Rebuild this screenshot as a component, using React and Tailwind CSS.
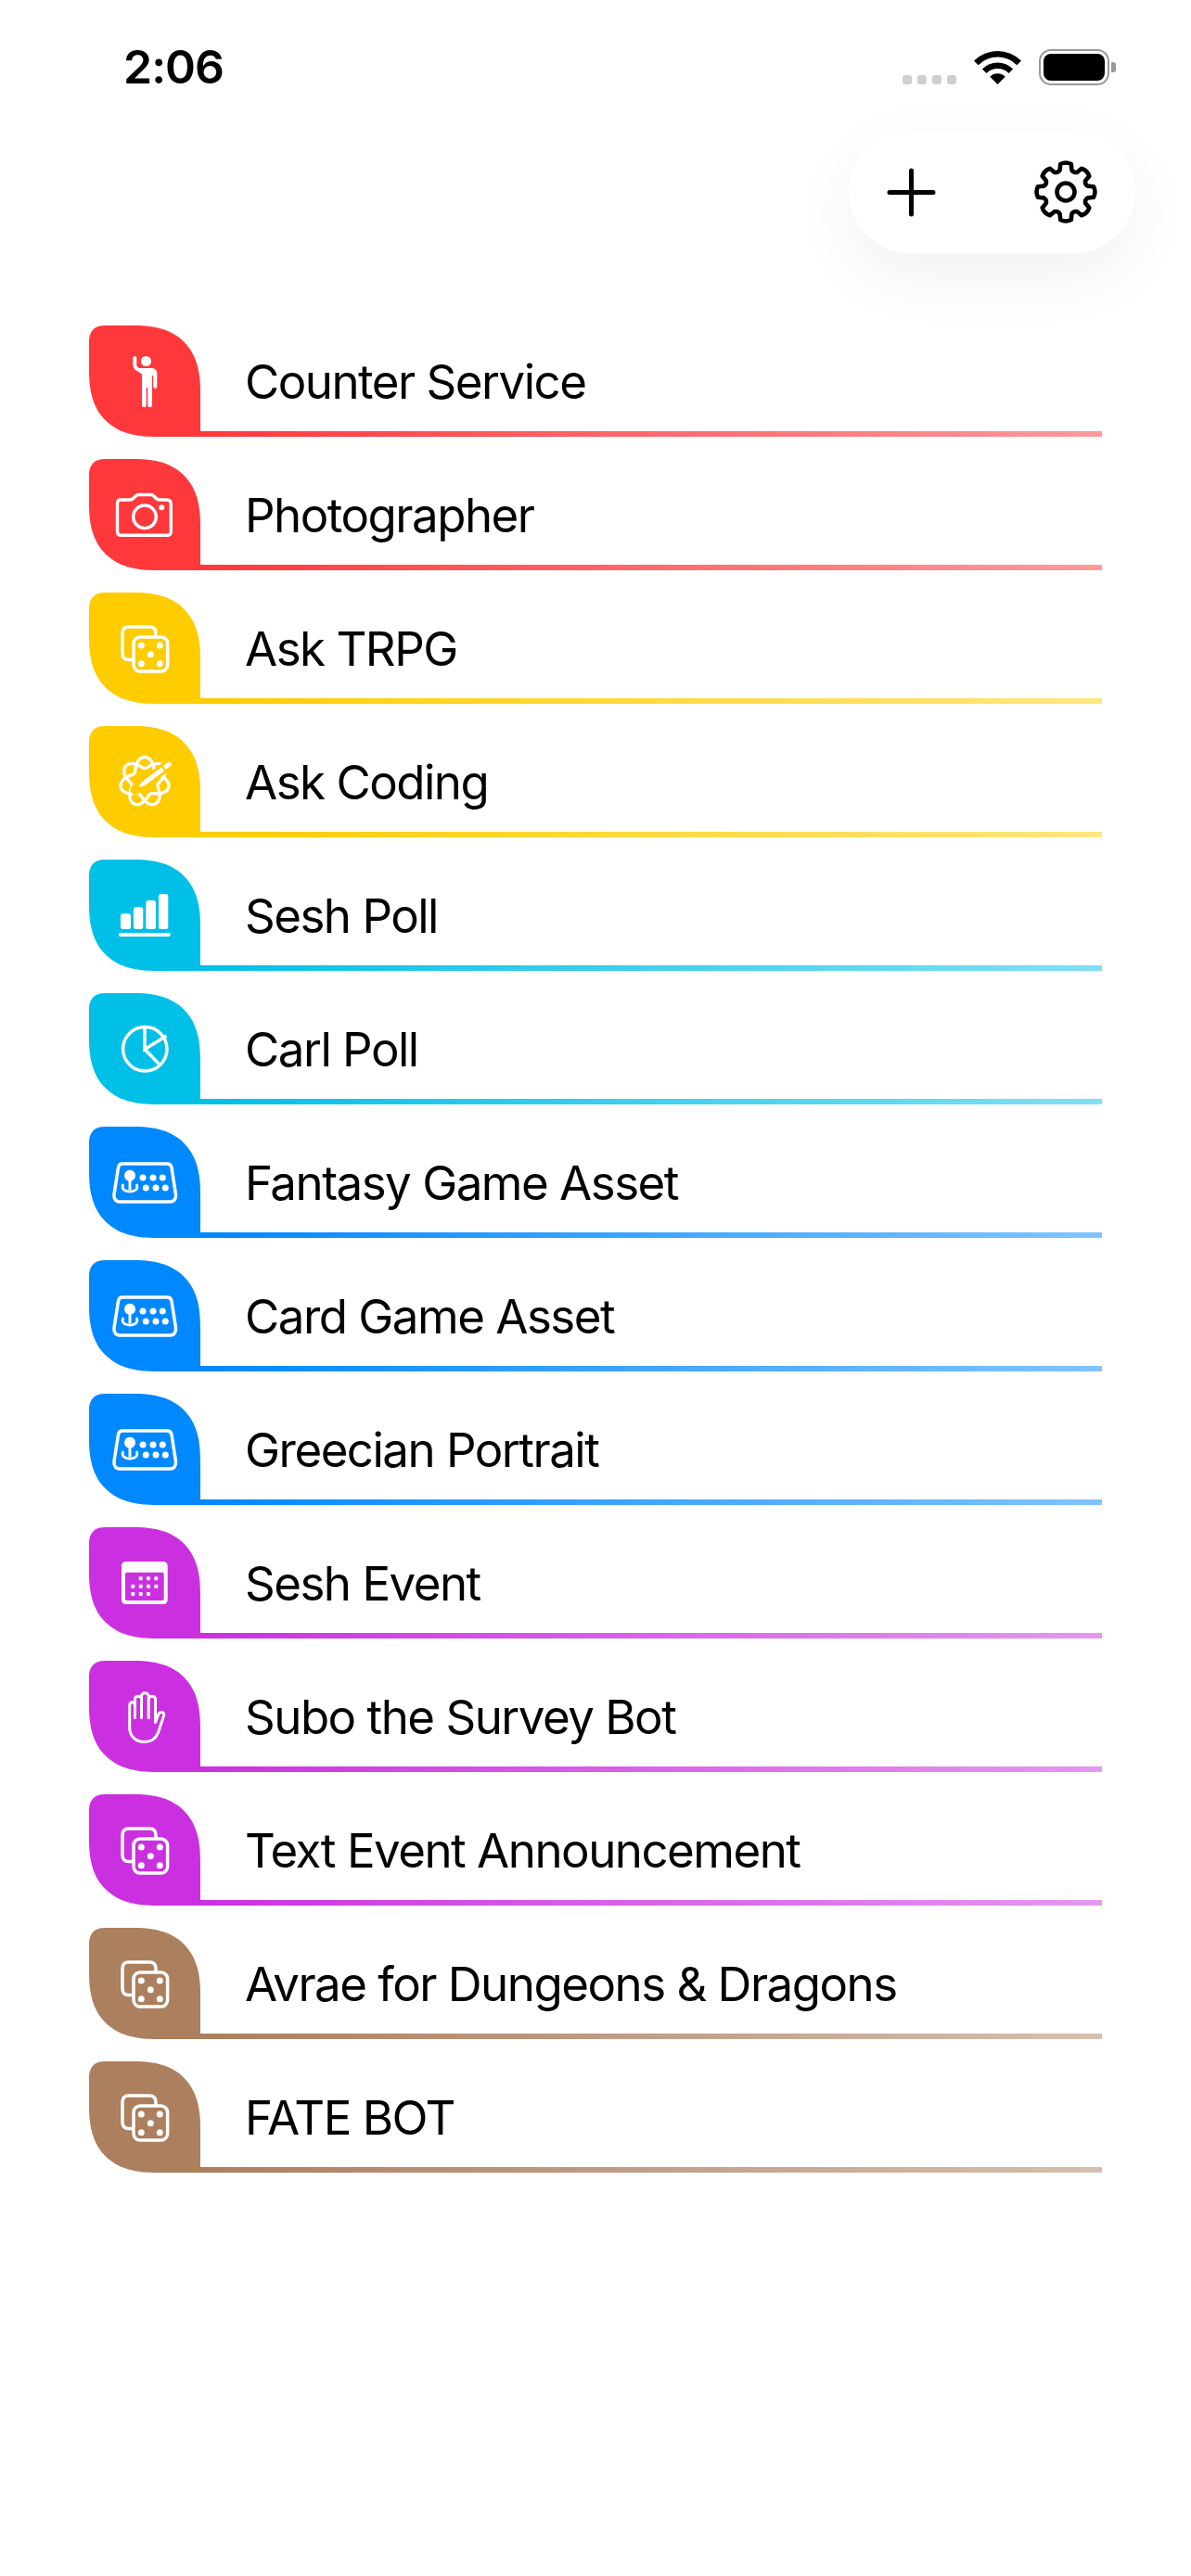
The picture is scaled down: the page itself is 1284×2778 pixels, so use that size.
const FONT = "font-['Inter',sans-serif]";
const ICON = 'w-[120px] h-[120px]';

function Person() {
  return (
    <svg viewBox="0 0 120 120" className={ICON} fill="white">
      <circle cx="61.500" cy="38.500" r="5.500" />
      <path d="M47.300 35a2 2 0 0 1 4 0v7.500c0 1.300.6 2.100 1.700 2.700l1 .8h13.500c3.300 0 5.800 2.200 5.800 5.500V66a2 2 0 0 1-4 0V54h-1.300v32a2.300 2.300 0 0 1-4.700 0V67h-1.600v19a2.300 2.300 0 0 1-4.700 0V52.500l-4.200-2.800c-3.200-1.800-5.500-3.700-5.500-8z" />
    </svg>
  );
}

function Camera() {
  return (
    <svg viewBox="0 0 120 120" className={ICON} fill="none" stroke="white" strokeWidth="3.400">
      <path d="M34 44h9.500c2.500 0 3.500-.7 4.700-2l2-2c1-1.100 2-1.500 3.500-1.500h12.600c1.500 0 2.500.4 3.500 1.500l2 2c1.200 1.300 2.200 2 4.700 2h7c3 0 4.800 1.500 4.800 4.500v29.500c0 2.700-1.500 4.300-4.300 4.300H34.800c-2.800 0-4.300-1.600-4.300-4.300V48c0-2.500 1.200-4 3.500-4z" />
      <circle cx="60" cy="62.300" r="12.300" />
      <circle cx="78.300" cy="52.300" r="3" fill="white" stroke="none" />
    </svg>
  );
}

function Dice() {
  return (
    <svg viewBox="0 0 120 120" className={ICON} fill="none" stroke="white" strokeWidth="3.500">
      <path d="M47 72.500h-4c-4.500 0-7-2.500-7-7V44c0-4.500 2.500-7 7-7h22c4.500 0 7 2.500 7 7v3" />
      <rect x="48" y="48" width="36.600" height="37" rx="7" />
      <g fill="white" stroke="none">
        <circle cx="56.300" cy="57" r="3.500" />
        <circle cx="76.300" cy="57" r="3.500" />
        <circle cx="66.300" cy="66.700" r="3.500" />
        <circle cx="56.300" cy="76.700" r="3.500" />
        <circle cx="76.300" cy="76.700" r="3.500" />
      </g>
    </svg>
  );
}

// seven-lobed wound orbit, traced twice round the centre
function orbitPath() {
  const pts = [];
  for (let i = 0; i <= 280; i++) {
    const t = (i / 280) * 4 * Math.PI;
    const r = 20.500 + 6 * Math.cos(3.5 * (t + Math.PI / 2));
    const x = 60 + r * Math.cos(t);
    const y = 60 + r * Math.sin(t);
    pts.push(`${x.toFixed(2)} ${y.toFixed(2)}`);
  }
  return 'M' + pts.join('L') + 'Z';
}

function Atom() {
  return (
    <svg viewBox="0 0 120 120" className={ICON} fill="none" strokeLinecap="round">
      <path d={orbitPath()} stroke="white" strokeWidth="3.300" />
      <path d="M50 68.500L92 37" stroke="currentColor" strokeWidth="11" />
      <path d="M53.300 66L56.600 60.400L78.200 44.200L81.200 48.200L59.600 64.400Z" fill="white" />
      <path d="M83 43.500L86 41.300" stroke="white" strokeWidth="5" />
    </svg>
  );
}

function Bars() {
  return (
    <svg viewBox="0 0 120 120" className={ICON} fill="white">
      <rect x="34" y="58.300" width="11" height="16.700" rx="2.500" />
      <rect x="48" y="51.300" width="10.300" height="23.700" rx="2.500" />
      <rect x="61.300" y="44" width="10.700" height="31" rx="2.500" />
      <rect x="75" y="37" width="10.300" height="38" rx="2.500" />
      <rect x="32" y="79" width="55.700" height="4" rx="2" />
    </svg>
  );
}

function Pie() {
  return (
    <svg viewBox="0 0 120 120" className={ICON} fill="none" stroke="white" strokeWidth="3.500">
      <circle cx="60.300" cy="60.300" r="23.700" />
      <path d="M60 37v23.500l23.500-14.500M60 60.500l15 15.500" />
    </svg>
  );
}

function Arcade() {
  return (
    <svg viewBox="0 0 120 120" className={ICON} fill="none" stroke="white" strokeWidth="3.500">
      <path d="M36 40h48c3 0 4.500 1.500 5 4l4.500 29c.5 4-1.500 8-6 8H33c-4.500 0-6.500-4-6-8l4.500-29c.5-2.500 2-4 4.500-4z" />
      <path d="M36.500 63c-1.500 4 1.500 7 7.500 7s9-3 7.500-7" strokeWidth="2.800" strokeLinecap="round" />
      <path d="M44 56v12" strokeWidth="3" />
      <g fill="white" stroke="none">
        <circle cx="44" cy="52.700" r="6" />
        <circle cx="58" cy="55" r="3.500" />
        <circle cx="69" cy="55" r="3.500" />
        <circle cx="79.300" cy="55" r="3.500" />
        <circle cx="61.300" cy="66" r="3.500" />
        <circle cx="72" cy="66" r="3.500" />
        <circle cx="82.300" cy="66" r="3.500" />
      </g>
    </svg>
  );
}

function Calendar() {
  const dots = [
    [55.700, 55.300], [64, 55.300], [72.300, 55.300],
    [47.300, 63.700], [55.700, 63.700], [64, 63.700], [72.300, 63.700],
    [47.300, 72], [55.700, 72], [64, 72],
  ];
  return (
    <svg viewBox="0 0 120 120" className={ICON} fill="white">
      <path fillRule="evenodd" d="M40 37h40c2.800 0 4.700 2 4.700 4.700V78c0 3-2 5-4.700 5H40c-3 0-5-2-5-5V41.700C35 39 37 37 40 37zm1 11.700c-1.300 0-2 .8-2 2V77c0 1.300.8 2 2 2h37.700c1.300 0 2-.7 2-2V50.700c0-1.200-.7-2-2-2z" />
      {dots.map(([x, y], i) => (
        <rect key={i} x={x - 2} y={y - 2} width="4" height="4" rx="1" />
      ))}
    </svg>
  );
}

function Hand() {
  return (
    <svg viewBox="0 0 120 120" className={ICON} fill="none" stroke="white" strokeWidth="3" strokeLinecap="round" strokeLinejoin="round">
      <path d="M49.500 61.500V48c0-4.500-5.800-4.500-5.800 0v24c0 9.500 7 15.500 16 15.500 7.500 0 12.500-4 15-10.500l5.800-17.500c1.300-4-3.500-5.500-5.500-2.300L71.500 66.500V41.500c0-4.500-7.300-4.500-7.300 0" />
      <path d="M49.500 48V41.500c0-4.500 7-4.500 7 0V61.500" />
      <path d="M56.500 41.500V38.500c0-5 7.700-5 7.700 0V61.500" />
    </svg>
  );
}

function Plus() {
  return (
    <svg viewBox="0 0 53 53" className="h-[53px] w-[53px]" fill="none" stroke="black" strokeWidth="5" strokeLinecap="round">
      <path d="M26.500 3v47M3 26.500h47" />
    </svg>
  );
}

function gearPath() {
  const c = 35;
  const pt = (r, deg) => {
    const a = (deg * Math.PI) / 180;
    return `${(c + r * Math.cos(a)).toFixed(2)} ${(c + r * Math.sin(a)).toFixed(2)}`;
  };
  let d = '';
  for (let i = 0; i < 8; i++) {
    const a = -90 + i * 45;
    d += `${i === 0 ? 'M' : 'L'}${pt(24.500, a - 15)}`;
    d += `L${pt(30.500, a - 11)}Q${pt(33, a)} ${pt(30.500, a + 11)}`;
    d += `L${pt(24.500, a + 15)}Q${pt(22, a + 22.500)} ${pt(24.500, a + 30)}`;
  }
  return d + 'Z';
}

function Gear() {
  return (
    <svg viewBox="0 0 70 70" className="h-[70px] w-[70px]" fill="none" stroke="black" strokeWidth="4.600" strokeLinejoin="round">
      <path d={gearPath()} />
      <circle cx="35" cy="35" r="9.500" />
    </svg>
  );
}

function wedge(r1, r2) {
  const s = Math.SQRT1_2;
  const cx = 25.500;
  const cy = 37;
  const outer = `M${cx - r1 * s} ${cy - r1 * s}A${r1} ${r1} 0 0 1 ${cx + r1 * s} ${cy - r1 * s}`;
  if (r2 === 0) return `${outer}L${cx} ${cy}Z`;
  return `${outer}L${cx + r2 * s} ${cy - r2 * s}A${r2} ${r2} 0 0 0 ${cx - r2 * s} ${cy - r2 * s}Z`;
}

function Wifi() {
  return (
    <svg viewBox="0 0 51 37" className="h-[37px] w-[51px]" fill="black">
      <path d={wedge(36, 29.500)} />
      <path d={wedge(23.500, 17)} />
      <path d={wedge(11.700, 0)} />
    </svg>
  );
}

function StatusIcons() {
  return (
    <div className="mt-[9px] flex items-end gap-[19px]">
      <div className="flex gap-[6px] pb-px">
        <div className="h-[10px] w-[10px] rounded-[3px] bg-[#cfcfcf]" />
        <div className="h-[10px] w-[10px] rounded-[3px] bg-[#cfcfcf]" />
        <div className="h-[10px] w-[10px] rounded-[3px] bg-[#cfcfcf]" />
        <div className="h-[10px] w-[10px] rounded-[3px] bg-[#cfcfcf]" />
      </div>
      <div className="pb-px">
        <Wifi />
      </div>
      <div className="relative h-[39px] w-[76px] rounded-[13px] border-[2.5px] border-[#999999] p-[3px]">
        <div className="h-full w-full rounded-[8px] bg-black" />
        <div className="absolute right-[-9px] top-[12px] h-[11px] w-[5px] rounded-r-[3px] bg-[#999999]" />
      </div>
    </div>
  );
}

const rows = [
  { name: 'Counter Service', color: '#ff383c', end: '#ff9b9d', Icon: Person },
  { name: 'Photographer', color: '#ff383c', end: '#ff9b9d', Icon: Camera },
  { name: 'Ask TRPG', color: '#ffcc00', end: '#ffe680', Icon: Dice },
  { name: 'Ask Coding', color: '#ffcc00', end: '#ffe680', Icon: Atom },
  { name: 'Sesh Poll', color: '#00c0e8', end: '#80e0f4', Icon: Bars },
  { name: 'Carl Poll', color: '#00c0e8', end: '#80e0f4', Icon: Pie },
  { name: 'Fantasy Game Asset', color: '#0088ff', end: '#80c4ff', Icon: Arcade },
  { name: 'Card Game Asset', color: '#0088ff', end: '#80c4ff', Icon: Arcade },
  { name: 'Greecian Portrait', color: '#0088ff', end: '#80c4ff', Icon: Arcade },
  { name: 'Sesh Event', color: '#cb30e0', end: '#e598f0', Icon: Calendar },
  { name: 'Subo the Survey Bot', color: '#cb30e0', end: '#e598f0', Icon: Hand },
  { name: 'Text Event Announcement', color: '#cb30e0', end: '#e598f0', Icon: Dice },
  { name: 'Avrae for Dungeons & Dragons', color: '#ac7f5e', end: '#d6bfaf', Icon: Dice },
  { name: 'FATE BOT', color: '#ac7f5e', end: '#d6bfaf', Icon: Dice },
];

function Row({ name, color, end, Icon }) {
  return (
    <div className="relative flex h-[120px] w-[1092px] items-center">
      <div
        className="h-[120px] w-[120px] shrink-0 rounded-tl-[18px] rounded-tr-[72px] rounded-bl-[72px] [corner-shape:superellipse(1.3)]"
        style={{ backgroundColor: color, color }}
      >
        <Icon />
      </div>
      <span className="pl-[48px] text-[51px] leading-none tracking-[-1.5px] text-black">{name}</span>
      <div
        className="absolute bottom-0 left-[120px] right-0 h-[6px]"
        style={{ backgroundImage: `linear-gradient(to right, ${color}, ${end})` }}
      />
    </div>
  );
}

export default function App() {
  return (
    <div className={`h-[2778px] w-[1284px] bg-white ${FONT}`}>
      <div className="flex h-[141px] items-start justify-between pl-[133px] pr-[88px] pt-[44px]">
        <span className="text-[50px] font-semibold leading-[56px] tracking-[-1px] text-black">2:06</span>
        <StatusIcons />
      </div>
      <div className="flex justify-end pr-[60px]">
        <div className="flex h-[132px] w-[309px] items-center justify-between rounded-[66px] bg-white pl-[41px] pr-[40px] shadow-[0_24px_70px_rgba(0,0,0,0.06)]">
          <Plus />
          <Gear />
        </div>
      </div>
      <div className="mt-[78px] flex flex-col gap-[24px] pl-[96px]">
        {rows.map((row) => (
          <Row key={row.name} {...row} />
        ))}
      </div>
    </div>
  );
}
